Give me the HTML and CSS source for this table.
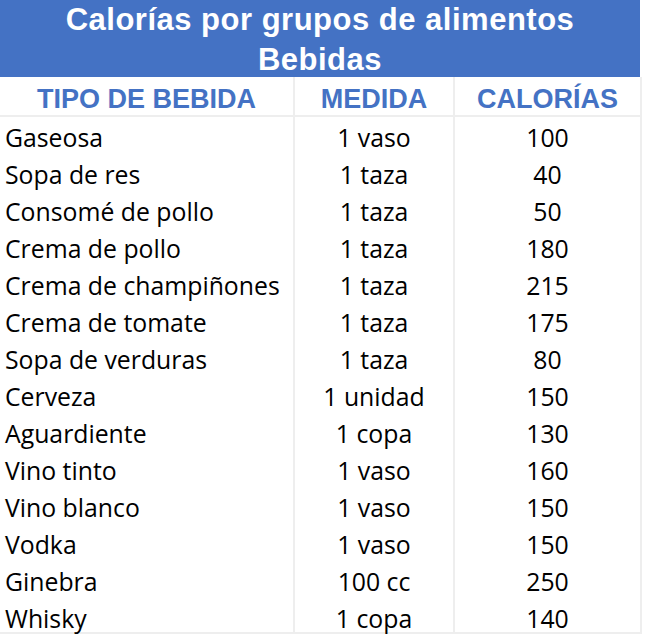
FILE: index.html
```html
<!DOCTYPE html>
<html lang="es">
<head>
<meta charset="utf-8">
<title>Calorías por grupos de alimentos</title>
<link rel="stylesheet" href="styles.css">
</head>
<body>
<div class="sheet">
  <div class="title">
    <div>Calorías por grupos de alimentos</div>
    <div>Bebidas</div>
  </div>
  <div class="row head">
    <div class="cell">TIPO DE BEBIDA</div>
    <div class="cell">MEDIDA</div>
    <div class="cell">CALORÍAS</div>
  </div>
  <div class="body">
    <div class="row"><div class="cell name">Gaseosa</div><div class="cell">1 vaso</div><div class="cell">100</div></div>
    <div class="row"><div class="cell name">Sopa de res</div><div class="cell">1 taza</div><div class="cell">40</div></div>
    <div class="row"><div class="cell name">Consomé de pollo</div><div class="cell">1 taza</div><div class="cell">50</div></div>
    <div class="row"><div class="cell name">Crema de pollo</div><div class="cell">1 taza</div><div class="cell">180</div></div>
    <div class="row"><div class="cell name">Crema de champiñones</div><div class="cell">1 taza</div><div class="cell">215</div></div>
    <div class="row"><div class="cell name">Crema de tomate</div><div class="cell">1 taza</div><div class="cell">175</div></div>
    <div class="row"><div class="cell name">Sopa de verduras</div><div class="cell">1 taza</div><div class="cell">80</div></div>
    <div class="row"><div class="cell name">Cerveza</div><div class="cell">1 unidad</div><div class="cell">150</div></div>
    <div class="row"><div class="cell name">Aguardiente</div><div class="cell">1 copa</div><div class="cell">130</div></div>
    <div class="row"><div class="cell name">Vino tinto</div><div class="cell">1 vaso</div><div class="cell">160</div></div>
    <div class="row"><div class="cell name">Vino blanco</div><div class="cell">1 vaso</div><div class="cell">150</div></div>
    <div class="row"><div class="cell name">Vodka</div><div class="cell">1 vaso</div><div class="cell">150</div></div>
    <div class="row"><div class="cell name">Ginebra</div><div class="cell">100 cc</div><div class="cell">250</div></div>
    <div class="row last"><div class="cell name">Whisky</div><div class="cell">1 copa</div><div class="cell">140</div></div>
  </div>
</div>
</body>
</html>
```
FILE: styles.css
```css
html, body {
  margin: 0;
  padding: 0;
  background: #ffffff;
}

.sheet {
  width: 642px;
}

.title {
  width: 640px;
  height: 77px;
  background: #4472c4;
  color: #ffffff;
  font-family: "Liberation Sans", Arial, sans-serif;
  font-weight: bold;
  font-size: 31px;
  letter-spacing: 0.5px;
  line-height: 40px;
  text-align: center;
  overflow: hidden;
}

.row {
  display: grid;
  grid-template-columns: 295px 160px 187px;
}

.cell {
  border-right: 2px solid #eeeeee;
  text-align: center;
  white-space: nowrap;
}

.head {
  border-bottom: 2px solid #eeeeee;
}

.head .cell {
  height: 38px;
  box-sizing: border-box;
  padding-top: 6px;
  line-height: 32px;
  font-family: "Liberation Sans", Arial, sans-serif;
  font-weight: bold;
  font-size: 27px;
  color: #4472c4;
}

.body {
  border-bottom: 2px solid #eeeeee;
}

.body .row {
  height: 37px;
}

.body .row.last {
  height: 34px;
}

.body .cell {
  box-sizing: border-box;
  padding-top: 2px;
  line-height: 37px;
  font-family: "Open Sans", sans-serif;
  font-size: 24.8px;
  color: #000000;
}

.body .cell.name {
  text-align: left;
  padding-left: 5px;
}
```
